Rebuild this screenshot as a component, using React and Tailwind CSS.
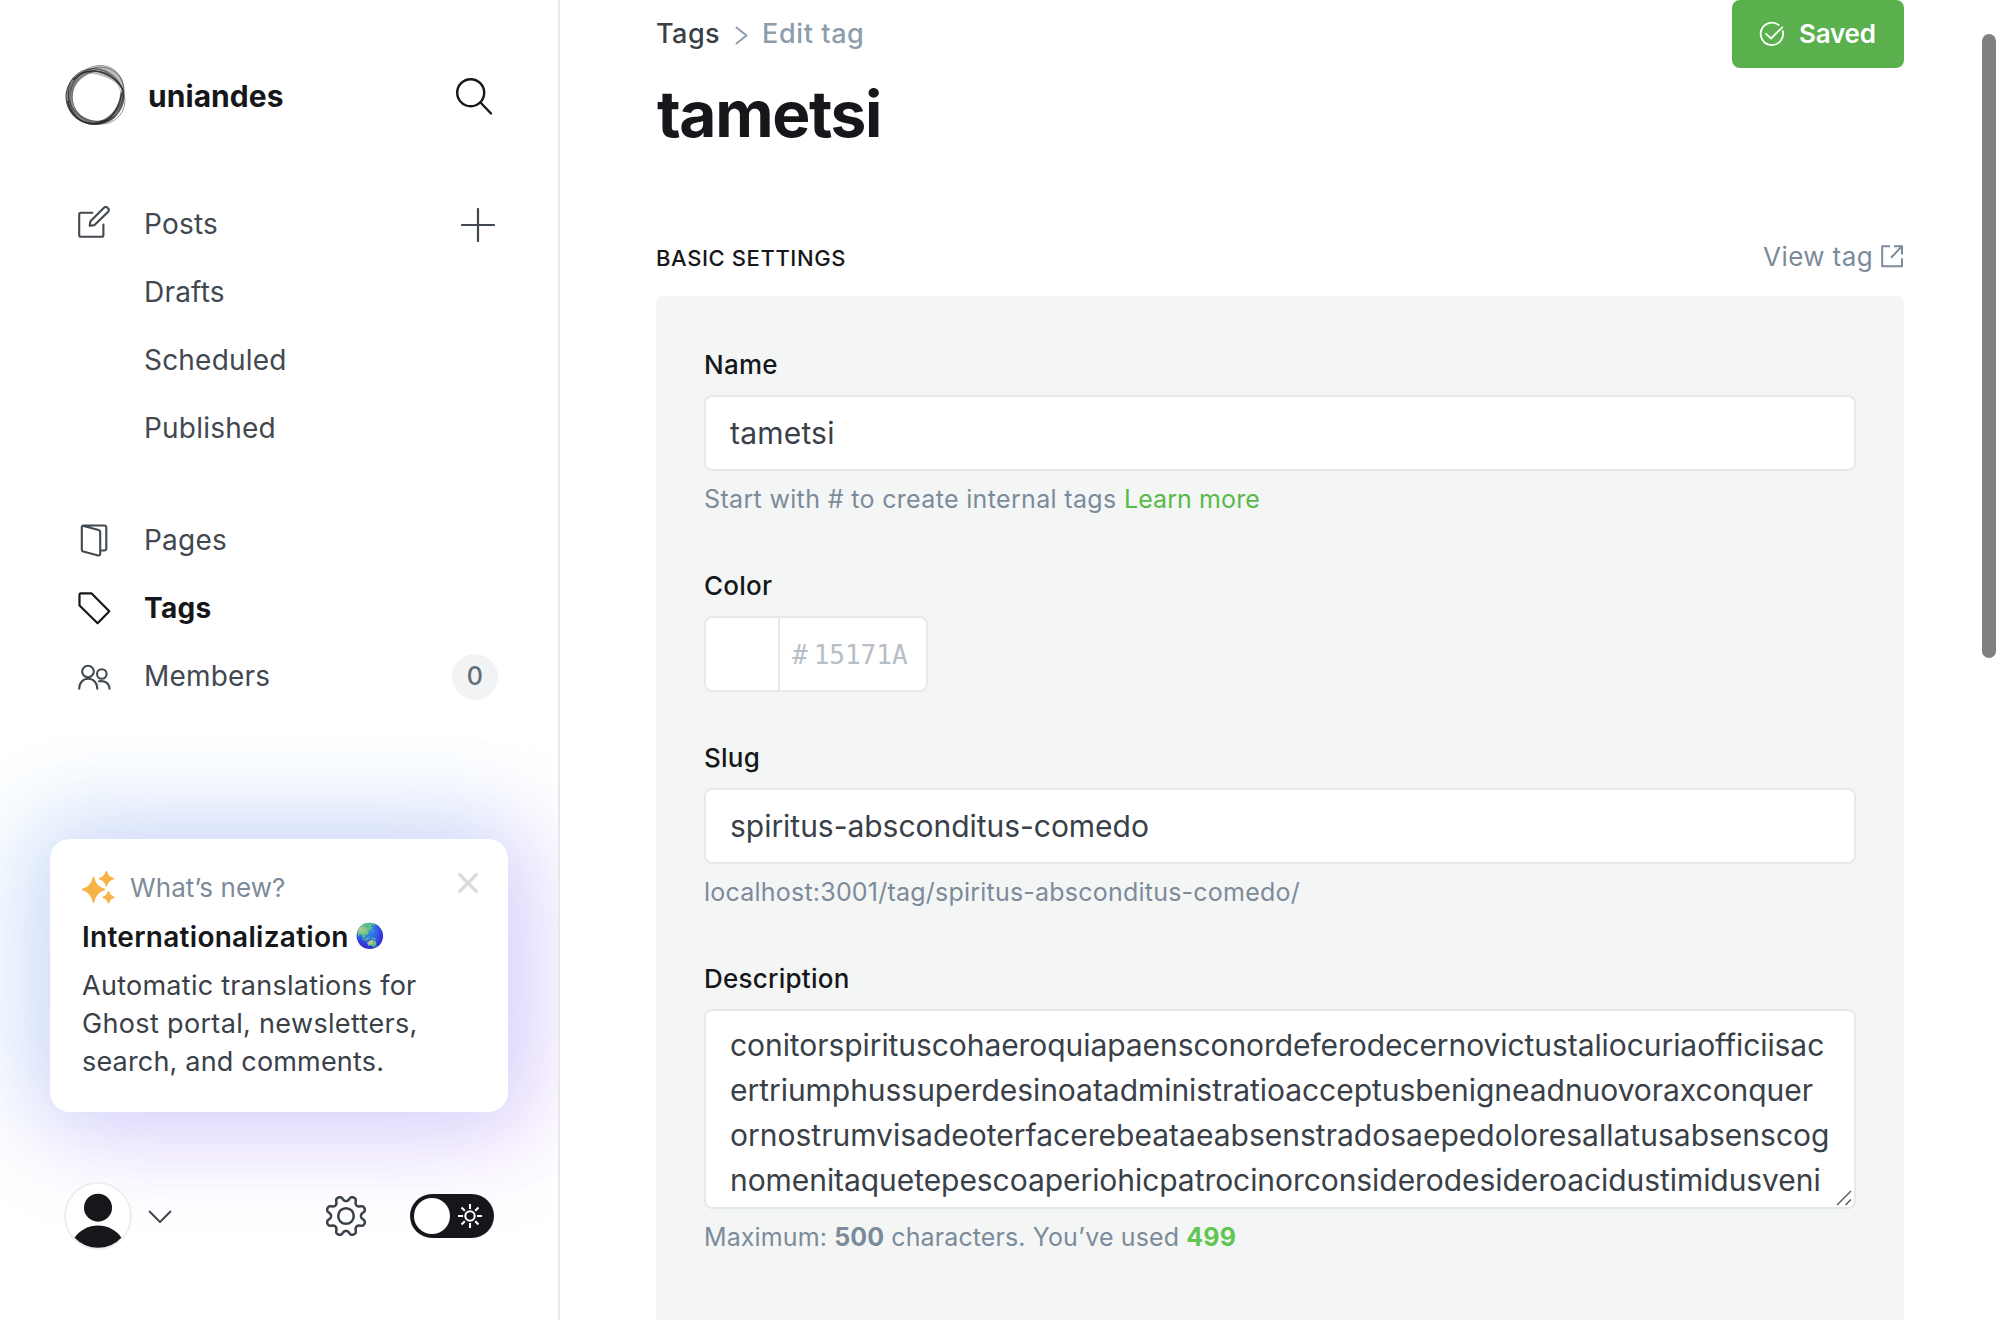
import React from "react";

const gearPath = (() => {
  const pts = [];
  for (let i = 0; i < 240; i++) {
    const t = (i / 240) * Math.PI * 2;
    const c = Math.cos(8 * (t - Math.PI / 8));
    const r = 17.5 + (2.5 * Math.tanh(1.5 * c)) / Math.tanh(1.5);
    pts.push(`${(21 + r * Math.cos(t)).toFixed(2)} ${(21 + r * Math.sin(t)).toFixed(2)}`);
  }
  return `M${pts.join("L")}Z`;
})();

function Icon({ w, h, sw = 2.1, className = "", children }) {
  return (
    <svg
      width={w}
      height={h}
      viewBox={`0 0 ${w} ${h}`}
      fill="none"
      stroke="currentColor"
      strokeWidth={sw}
      strokeLinecap="round"
      strokeLinejoin="round"
      className={`block shrink-0 ${className}`}
    >
      {children}
    </svg>
  );
}

function Logo() {
  return (
    <svg width="64" height="64" viewBox="0 0 64 64" fill="none" className="block shrink-0 -translate-y-px">
      <g fill="#222">
        <path opacity=".5" d="M25 7.500C12 10 2.500 21 2.500 34 3 50 15 61.500 31 61.500 42 61.500 50 58 54 52 46 57 37 59 30 57.500 18 55 9.500 46 9.800 34 10 22 18 13 31 9Z" />
        <path opacity=".3" d="M22 10C29 1 47 0 56.500 13 60 18 61 23 60 29 55 18 40 11 22 10Z" />
        <path opacity=".45" d="M59.500 24C65 38 58 54 44 59.500 38 61.500 34 61 30 60 44 57 56 47 57 31Z" />
      </g>
      <g stroke="#222" strokeWidth=".8">
        <ellipse cx="31.500" cy="33.500" rx="28.500" ry="27.800" opacity=".7" />
        <ellipse cx="33" cy="32" rx="30" ry="25.500" transform="rotate(-45 33 32)" opacity=".55" />
        <ellipse cx="34" cy="31.500" rx="30" ry="26" transform="rotate(-60 34 31.500)" opacity=".55" />
        <ellipse cx="33.500" cy="33.500" rx="30" ry="26" transform="rotate(40 33.500 33.500)" opacity=".55" />
        <ellipse cx="33" cy="33" rx="28" ry="25" transform="rotate(15 33 33)" opacity=".45" />
        <ellipse cx="33.500" cy="33.500" rx="24.500" ry="25.300" opacity=".35" />
        <path d="M10 17C17 9 24 7.500 31 8 43 9 54 16 59.500 26M4.500 38C8 52 18 61 31 61.300 44 61 55 50 59 30" strokeWidth="1.500" opacity=".8" />
      </g>
    </svg>
  );
}

function NavRow({ icon, label, active, right }) {
  return (
    <div className={`flex h-[68px] items-center pl-[78px] pr-[63px] text-[28px] ${active ? "font-bold text-[#15171a] tracking-[0.3px]" : "text-[#414850] tracking-[0.2px]"}`}>
      <div className="flex w-8 justify-center">{icon}</div>
      <span className="ml-[34px] grow">{label}</span>
      {right}
    </div>
  );
}

function Sidebar() {
  return (
    <aside className="relative flex h-[1320px] w-[560px] shrink-0 flex-col overflow-hidden border-r-2 border-[#e6e8ea] bg-white">
      <div className="mt-[62px] flex h-[68px] items-center pl-[63px]">
        <Logo />
        <span className="ml-[21px] w-[308px] text-[30px] font-bold tracking-[0.05px] text-[#15171a]">uniandes</span>
        <Icon w={37} h={37} sw={2.4} className="text-[#15171a]">
          <circle cx="14.700" cy="14.700" r="13.500" />
          <path d="M24.500 24.500 35 35.500" />
        </Icon>
      </div>

      <nav className="mt-[60px]">
        <NavRow
          label="Posts"
          icon={
            <Icon w={32} h={32} className="-translate-y-[2px]">
              <path d="M14.300 6.800H3a1.800 1.800 0 0 0-1.800 1.800V29A1.800 1.800 0 0 0 3 30.800h20.600a1.800 1.800 0 0 0 1.800-1.800V18.500" />
              <path d="M11.700 19.800l.7-4.600L25.700 2a2.800 2.800 0 0 1 4.200 4L16.500 19.100Z" />
            </Icon>
          }
          right={
            <Icon w={34} h={34} sw={2.200} className="translate-y-px">
              <path d="M17 1v32M1 17h32" />
            </Icon>
          }
        />
        <NavRow label="Drafts" />
        <NavRow label="Scheduled" />
        <NavRow label="Published" />
      </nav>

      <nav className="mt-11">
        <NavRow
          label="Pages"
          icon={
            <Icon w={28} h={34} className="translate-y-[0.5px]">
              <path d="M2.700 2.200 18.600 6.600A2 2 0 0 1 20.200 8.500V30.500a1.500 1.500 0 0 1-2 1.400L3.200 28A2 2 0 0 1 1.800 26V3.600A1.700 1.700 0 0 1 3.500 2H24.500A1.800 1.800 0 0 1 26.300 3.800V25.200A1.800 1.800 0 0 1 24.500 27H20.500" />
            </Icon>
          }
        />
        <NavRow
          label="Tags"
          active
          icon={
            <Icon w={33} h={33} sw={2.200}>
              <path d="M2.800 1.300H13.400L31.300 19.300 19.600 31.300 1.500 13.500V2.500A1.300 1.300 0 0 1 2.800 1.300Z" />
            </Icon>
          }
        />
        <NavRow
          label="Members"
          icon={
            <Icon w={33} h={27} className="translate-y-[0.500px]">
              <circle cx="10" cy="8" r="5.800" />
              <circle cx="23.800" cy="10.500" r="4.800" />
              <path d="M1.200 25.200C1.200 19 5 15.300 10.200 15.300S19.300 19 19.300 25.200M21 17.800C27 16.800 31.300 19.800 31.500 25.200" />
            </Icon>
          }
          right={
            <span className="-mr-[3px] flex size-[46px] translate-y-px items-center justify-center rounded-full bg-[#f1f3f5] text-[25px] font-medium text-[#626d79]">0</span>
          }
        />
      </nav>

      <section className="relative ml-[50px] mt-[129px] h-[273px] w-[458px] rounded-[20px] bg-white pl-8 pt-[31px] shadow-[-14px_-12px_92px_16px_rgba(75,200,226,0.22),14px_12px_92px_16px_rgba(202,103,255,0.28)]">
        <div className="flex h-9 items-center">
          <svg width="34" height="34" viewBox="0 0 34 34" className="block" fill="#f6b448">
            <path d="M11.500 6.600Q13.700 16.200 22.500 18.600 13.700 21 11.500 31 9.300 21 .5 18.600 9.300 16.200 11.500 6.600Z" stroke="#f6b448" strokeWidth="1.600" strokeLinejoin="round" />
            <path d="M24.400 .8Q25.700 6.500 31.300 7.800 25.700 9.100 24.400 14.800 23.100 9.100 17.500 7.800 23.100 6.500 24.400 .8Z" stroke="#f6b448" strokeWidth="1.600" strokeLinejoin="round" />
            <path d="M26.500 20.800Q27.700 25.200 31.700 26.300 27.700 27.400 26.500 31.800 25.300 27.400 21.300 26.300 25.300 25.200 26.500 20.800Z" stroke="#f6b448" strokeWidth="1.600" strokeLinejoin="round" />
          </svg>
          <span className="ml-3.5 w-[328px] -translate-y-px text-[26px] tracking-[0.08px] text-[#7c8b9a]">What’s new?</span>
          <Icon w={20} h={20} sw={3.4} className="-translate-y-[5px] text-[#dadbdc]">
            <path d="M1.800 1.800 18.200 18.200M18.200 1.800 1.800 18.200" />
          </Icon>
        </div>
        <div className="mt-[13px] flex h-9 items-center text-[28px] font-semibold tracking-[0.28px] text-[#15171a]">
          Internationalization
          <span className="ml-[7px] -translate-y-px text-[24px] leading-none tracking-normal hue-rotate-[18deg] saturate-[0.9] brightness-[0.82] contrast-125">🌏</span>
        </div>
        <p className="mt-3 text-[27px] leading-[38px] tracking-[0.27px] text-[#394047]">
          Automatic translations for
          <br />
          <span className="tracking-[0.34px]">Ghost portal, newsletters,</span>
          <br />
          <span className="tracking-[0.18px]">search, and comments.</span>
        </p>
      </section>

      <footer className="relative mt-[70px] flex h-[68px] items-center pl-16">
        <svg width="68" height="68" viewBox="0 0 68 68" className="block shrink-0">
          <circle cx="34" cy="34" r="33" fill="#fff" stroke="#eceef0" strokeWidth="2" />
          <circle cx="34" cy="25.700" r="14" fill="#15171a" />
          <path d="M10.600 55.700A28.500 28.500 0 0 1 57.400 55.700 32 32 0 0 1 10.600 55.700Z" fill="#15171a" />
        </svg>
        <Icon w={24} h={14} sw={1.800} className="ml-4 translate-y-px text-[#394047]">
          <path d="M1.500 1.500 12 12 22.500 1.500" />
        </Icon>
        <Icon w={42} h={42} sw={2.500} className="ml-[153px] text-[#394047]">
          <path d={gearPath} />
          <circle cx="21" cy="21" r="7.800" />
        </Icon>
        <div className="ml-[43px] flex h-11 w-[84px] items-center rounded-full bg-[#15171a] pl-1">
          <div className="size-9 rounded-full bg-white" />
          <svg width="24" height="24" viewBox="0 0 24 24" fill="none" stroke="#fff" strokeWidth="2.100" className="ml-2 block">
            <circle cx="12" cy="12" r="4.700" />
            <path d="M12 0v5M12 19v5M0 12h5M19 12h5M3.500 3.500l3.300 3.300M17.200 17.200l3.300 3.300M3.500 20.500l3.300-3.300M17.200 6.800l3.300-3.300" />
          </svg>
        </div>
      </footer>
    </aside>
  );
}

const label = "h-8 text-[26px] font-medium leading-[34px] tracking-[0.25px] text-[#15171a]";
const field = "mt-[15px] flex h-[76px] items-center rounded-lg border-2 border-[#e6e9e9] bg-white pl-6 text-[30px] text-[#394047]";
const help = "mt-3 h-8 text-[25px] leading-8 text-[#7c8b9a]";

const description = [
  ["conitorspirituscohaeroquiapaensconordeferodecernovictustaliocuriaofficiisac", "tracking-[-0.07px]"],
  ["ertriumphussuperdesinoatadministratioacceptusbenigneadnuovoraxconquer", "tracking-[-0.04px]"],
  ["ornostrumvisadeoterfacerebeataeabsenstradosaepedoloresallatusabsenscog", "tracking-[0.010px]"],
  ["nomenitaquetepescoaperiohicpatrocinorconsiderodesideroacidustimidusveni", "tracking-[-0.06px]"],
];

function Main() {
  return (
    <main className="ml-24 h-[1320px] w-[1248px] shrink-0 overflow-hidden">
      <header className="flex h-[154px] items-start justify-between">
        <div>
          <div className="flex h-[68px] items-center text-[27px] font-medium tracking-[0.45px]">
            <span className="text-[#394047]">Tags</span>
            <Icon w={13} h={19} sw={2} className="ml-[15px] mr-[14px] translate-y-px text-[#8e9cac]">
              <path d="M1.500 1.500 11.500 9.500 1.500 17.500" />
            </Icon>
            <span className="tracking-[0.6px] text-[#8e9cac]">Edit tag</span>
          </div>
          <h1 className="mt-1.5 pl-px text-[64px] font-bold leading-[80px] tracking-[-1.38px] text-[#15171a]">tametsi</h1>
        </div>
        <button className="flex h-[68px] w-[172px] items-center rounded-lg bg-[#5ab04c] pl-[27px] text-[26px] font-semibold text-white">
          <Icon w={26} h={26} sw={1.800}>
            <path d="M19.800 4A11.200 11.200 0 1 0 23.800 10.200M7 12.800 12 17.500 23.300 6.300" />
          </Icon>
          <span className="ml-3.5 -translate-y-px tracking-[-0.2px]">Saved</span>
        </button>
      </header>

      <div className="mt-[82px] flex h-10 items-center justify-between">
        <h4 className="mt-1 text-[22px] font-medium tracking-[0.6px] text-[#15171a]">BASIC SETTINGS</h4>
        <a className="flex items-center text-[26px] tracking-[0.4px] text-[#7c8b9a]">
          View tag
          <svg width="23" height="23" viewBox="0 0 23 23" fill="none" stroke="currentColor" strokeWidth="2" className="ml-2 block">
            <path d="M9 1.200H1.200V21.300H21V13.300M13 1.200H21V9.500M10 12.800 20.800 1.400" strokeLinejoin="round" />
          </svg>
        </a>
      </div>

      <section className="mt-5 h-[1100px] rounded-md bg-[#f4f6f6] px-12 pt-[52px]">
        <div className={label}>Name</div>
        <div className={`${field} tracking-[0.2px]`}>tametsi</div>
        <div className={`${help} tracking-[0.34px]`}>
          Start with # to create internal tags <a className="tracking-[0.1px] text-[#58ba48]">Learn more</a>
        </div>

        <div className={`${label} mt-[54px]`}>Color</div>
        <div className="mt-[15px] flex h-[76px] w-56 rounded-lg border-2 border-[#e6e9e9] bg-white font-['DejaVu_Sans_Mono',monospace] text-[26px] text-[#b6bec7]">
          <div className="w-[74px] border-r-2 border-[#e6e9e9]" />
          <div className="flex translate-y-px items-center pl-3">
            <span>#</span>
            <span className="ml-[6px]">15171A</span>
          </div>
        </div>

        <div className={`${label} mt-[49px]`}>Slug</div>
        <div className={`${field} tracking-[-0.03px]`}>spiritus-absconditus-comedo</div>
        <div className={`${help} tracking-[0.22px]`}>localhost:3001/tag/spiritus-absconditus-comedo/</div>

        <div className={`${label} mt-[54px]`}>Description</div>
        <div className="relative mt-[15px] h-[200px] overflow-hidden whitespace-nowrap rounded-lg border-2 border-[#e6e9e9] bg-white pl-6 pt-3 text-[30px] leading-[45px] text-[#394047]">
          {description.map(([line, tracking]) => (
            <div key={line} className={tracking}>{line}</div>
          ))}
          <svg width="16" height="16" viewBox="0 0 16 16" fill="none" stroke="#555" strokeWidth="1.400" className="absolute bottom-[1px] right-[2px]">
            <path d="M1 15 15 1M9.500 15 15 9.500" />
          </svg>
        </div>
        <div className={`${help} tracking-[0.11px]`}>
          Maximum: <b className="font-bold">500</b> characters. You’ve used <b className="font-bold text-[#62c552]">499</b>
        </div>
      </section>
    </main>
  );
}

export default function App() {
  return (
    <div className="flex h-[1320px] w-[2000px] overflow-hidden bg-white font-['Inter','Noto_Color_Emoji',sans-serif]">
      <Sidebar />
      <Main />
      <div className="ml-[78px] mt-[34px] h-[624px] w-3.5 rounded-full bg-[#808080]" />
    </div>
  );
}
